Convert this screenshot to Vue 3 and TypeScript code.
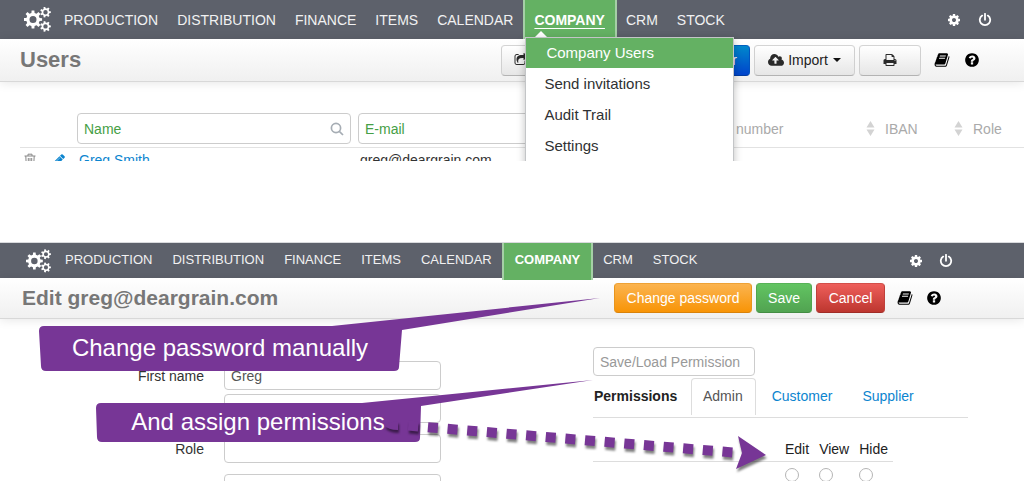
<script setup lang="ts">
import { ref } from 'vue'

const icons = {
  cog: 'M1152 896q0-106-75-181t-181-75-181 75-75 181 75 181 181 75 181-75 75-181zm512-109v222q0 12-8 23t-20 13l-185 28q-19 54-39 91 35 50 107 138 10 12 10 25t-9 23q-27 37-99 108t-94 71q-12 0-26-9l-138-108q-44 23-91 38-16 136-29 186-7 28-36 28h-222q-14 0-24.500-8.500t-11.500-21.500l-28-184q-49-16-90-37l-141 107q-10 9-25 9-14 0-25-11-126-114-165-168-7-10-7-23 0-12 8-23 15-21 51-66.500t54-70.500q-27-50-41-99l-183-27q-13-2-21-12.500t-8-23.500v-222q0-12 8-23t19-13l186-28q14-46 39-92-40-57-107-138-10-12-10-24 0-10 9-23 26-36 98.500-107.500t94.500-71.500q13 0 26 10l138 107q44-23 91-38 16-136 29-186 7-28 36-28h222q14 0 24.500 8.500t11.500 21.500l28 184q49 16 90 37l142-107q9-9 24-9 13 0 25 10 129 119 165 170 7 8 7 22 0 12-8 23-15 21-51 66.500t-54 70.500q26 50 41 98l183 28q13 2 21 12.500t8 23.500z',
  help: 'M1024 1376v-192q0-14-9-23t-23-9h-192q-14 0-23 9t-9 23v192q0 14 9 23t23 9h192q14 0 23-9t9-23zm256-672q0-88-55.500-163t-138.500-116-170-41q-243 0-371 213-15 24 8 42l132 100q7 6 19 6 16 0 25-12 53-68 86-92 34-24 86-24 48 0 85.500 26t37.500 59q0 38-20 61t-68 45q-63 28-115.500 86.500t-52.500 125.500v36q0 14 9 23t23 9h192q14 0 23-9t9-23q0-19 21.500-49.500t54.500-49.500q32-18 49-28.500t46-35 44.500-48 28-60.500 12.500-81zm384 192q0 209-103 385.500t-279.500 279.500-385.500 103-385.500-103-279.500-279.500-103-385.500 103-385.500 279.500-279.500 385.500-103 385.500 103 279.500 279.500 103 385.500z',
  cloud: 'M1280 864q0-14-9-23l-352-352q-9-9-23-9t-23 9l-351 351q-10 12-10 24 0 14 9 23t23 9h224v352q0 13 9.500 22.500t22.500 9.500h192q13 0 22.500-9.500t9.500-22.500v-352h224q13 0 22.500-9.500t9.500-22.500zm640 288q0 159-112.500 271.500t-271.500 112.500h-1088q-185 0-316.500-131.500t-131.500-316.500q0-130 70-240t188-165q-2-30-2-43 0-212 150-362t362-150q156 0 285.500 87t188.500 231q71-62 166-62 106 0 181 75t75 181q0 76-41 138 130 31 213.500 135.500t83.500 238.500z',
  print: 'M448 1536h896v-256h-896v256zm0-640h896v-384h-160q-40 0-68-28t-28-68v-160h-640v640zm1152 64q0-26-19-45t-45-19-45 19-19 45 19 45 45 19 45-19 19-45zm128 0v416q0 13-9.500 22.500t-22.500 9.500h-224v160q0 40-28 68t-68 28h-960q-40 0-68-28t-28-68v-160h-224q-13 0-22.500-9.500t-9.500-22.500v-416q0-79 56.500-135.500t135.500-56.500h64v-544q0-40 28-68t68-28h672q40 0 88 20t76 48l152 152q28 28 48 76t20 88v256h64q79 0 135.500 56.500t56.500 135.500z',
  book: 'M1703 478q40 57 18 129l-275 906q-19 64-76.500 107.500t-122.500 43.500h-923q-77 0-148.500-53.500t-99.500-131.500q-24-67-2-127 0-4 3-27t4-37q1-8-3-21.500t-3-19.500q2-11 8-21t16.500-23.500 16.500-23.500q23-38 45-91.500t30-91.500q3-10 .5-30t-.5-28q3-11 17-28t17-23q21-36 42-92t25-90q1-9-2.500-32t.5-28q4-13 22-30.500t22-22.500q19-26 42.500-84.500t27.500-96.500q1-8-3-25.500t-2-26.500q2-8 9-18t18-23 17-21q8-12 16.500-30.500t15-35 16-36 19.500-32 26.500-23.500 36-11.500 47.500 5.500l-1 3q38-9 51-9h761q74 0 114 56t18 130l-274 906q-36 119-71.500 153.500t-128.500 34.500h-869q-27 0-38 15-11 16-1 43 24 70 144 70h923q29 0 56-15.500t35-41.500l300-987q7-22 5-57 38 15 59 43zm-1064 2q-4 13 2 22.500t20 9.500h608q13 0 25.500-9.500t16.500-22.500l21-64q4-13-2-22.500t-20-9.500h-608q-13 0-25.500 9.500t-16.500 22.500zm-83 256q-4 13 2 22.500t20 9.500h608q13 0 25.500-9.500t16.500-22.500l21-64q4-13-2-22.500t-20-9.500h-608q-13 0-25.500 9.500t-16.500 22.500z',
  share: 'M1472 989v259q0 119-84.500 203.500t-203.500 84.500h-832q-119 0-203.500-84.500t-84.500-203.500v-832q0-119 84.500-203.500t203.500-84.500h255q13 0 22.500 9.500t9.500 22.500q0 27-26 32-77 26-133 60-10 4-16 4h-112q-66 0-113 47t-47 113v832q0 66 47 113t113 47h832q66 0 113-47t47-113v-214q0-19 18-29 28-13 54-37 16-16 35-8 21 9 21 31zm237-496l-384 384q-18 19-45 19-12 0-25-5-39-17-39-59v-192h-160q-323 0-438 131-119 137-74 473 3 23-20 34-8 2-12 2-16 0-26-13-10-14-21-31t-39.500-68.500-49.500-99.500-38.500-114-17.500-122q0-49 3.500-91t14-90 28-88 47-81.500 68.500-74 94.500-61.500 124.500-48.500 159.500-30.500 196.500-11h160v-192q0-42 39-59 13-5 25-5 26 0 45 19l384 384q19 19 19 45t-19 45z',
  pencil: 'M491 1536l91-91-235-235-91 91v107h128v128h107zm523-928q0-22-22-22-10 0-17 7l-542 542q-7 7-7 17 0 22 22 22 10 0 17-7l542-542q7-7 7-17zm-54-192l416 416-832 832h-416v-416zm683 96q0 53-37 90l-166 166-416-416 166-165q36-38 90-38 53 0 91 38l235 234q37 39 37 91z',
}

/** Path of a toothed wheel with a round hole (fill-rule: evenodd). */
function gear(cx: number, cy: number, outer: number, inner: number, hole: number, teeth: number): string {
  const step = (Math.PI * 2) / teeth
  const points: string[] = []
  for (let i = 0; i < teeth; i++) {
    const a = i * step
    const corners: [number, number][] = [
      [inner, -0.3], [outer, -0.19], [outer, 0.19], [inner, 0.3],
    ]
    for (const [r, t] of corners) {
      points.push(`${(cx + r * Math.cos(a + t * step)).toFixed(2)} ${(cy + r * Math.sin(a + t * step)).toFixed(2)}`)
    }
  }
  return `M${points.join('L')}ZM${cx - hole} ${cy}a${hole} ${hole} 0 1 0 ${hole * 2} 0a${hole} ${hole} 0 1 0 ${-hole * 2} 0Z`
}

const logo =
  gear(9, 12.5, 9.2, 6.8, 3.5, 8) + gear(21.5, 5.2, 5.4, 3.9, 2.2, 7) + gear(21.5, 19.4, 5.4, 3.9, 2.2, 7)

const sections = ['PRODUCTION', 'DISTRIBUTION', 'FINANCE', 'ITEMS', 'CALENDAR', 'COMPANY', 'CRM', 'STOCK']
const menu = ['Company Users', 'Send invitations', 'Audit Trail', 'Settings']
const tabs = ['Admin', 'Customer', 'Supplier']
const levels = ['Edit', 'View', 'Hide']

const nameFilter = ref('')
const emailFilter = ref('')
const firstName = ref('Greg')
const lastName = ref('')
const role = ref('')
const extra = ref('')
const preset = ref('')
const level = ref('')
</script>

<template>
  <div class="page">
    <section class="screen users">
      <nav class="nav">
        <svg class="logo" viewBox="0 0 28 25" aria-hidden="true"><path :d="logo" fill-rule="evenodd" /></svg>
        <ul class="sections">
          <li v-for="s in sections" :key="s" :class="{ current: s === 'COMPANY' }">
            <a href="#">{{ s }}</a>
            <template v-if="s === 'COMPANY'">
              <span class="caret-up"></span>
              <ul class="menu">
                <li v-for="(m, i) in menu" :key="m"><a href="#" :class="{ active: i === 0 }">{{ m }}</a></li>
              </ul>
            </template>
          </li>
        </ul>
        <div class="tools">
          <button type="button" aria-label="Preferences"><svg viewBox="0 0 1792 1792"><path :d="icons.cog" /></svg></button>
          <button type="button" aria-label="Log out">
            <svg class="power" viewBox="0 0 14 14"><path d="M4.200 2.600A5.200 5.200 0 1 0 9.800 2.600M7 .8V6.800" /></svg>
          </button>
        </div>
      </nav>
      <header class="bar">
        <h1>Users</h1>
        <div class="actions">
          <button type="button" class="btn export" aria-label="Export"><svg viewBox="0 0 1792 1792"><path :d="icons.share" /></svg></button>
          <button type="button" class="btn primary">user</button>
          <button type="button" class="btn import">
            <svg viewBox="0 0 1920 1792"><path :d="icons.cloud" /></svg>Import<span class="caret-down"></span>
          </button>
          <button type="button" class="btn print" aria-label="Print"><svg viewBox="0 0 1792 1792"><path :d="icons.print" /></svg></button>
          <a href="#" class="glyph" aria-label="Manual"><svg viewBox="0 0 1792 1792"><path :d="icons.book" /></svg></a>
          <a href="#" class="glyph" aria-label="Help"><svg viewBox="0 0 1792 1792"><path :d="icons.help" /></svg></a>
        </div>
      </header>
      <table class="list">
        <colgroup>
          <col class="c-icons" /><col class="c-name" /><col /><col class="c-number" /><col class="c-iban" /><col class="c-role" />
        </colgroup>
        <thead>
          <tr>
            <th></th>
            <th>
              <div class="search">
                <input v-model="nameFilter" type="text" placeholder="Name" aria-label="Name" />
                <svg viewBox="0 0 14 14"><circle cx="6" cy="6" r="4.600" /><path d="M9.300 9.300L13 13" /></svg>
              </div>
            </th>
            <th><div class="search"><input v-model="emailFilter" type="text" placeholder="E-mail" aria-label="E-mail" /></div></th>
            <th>number</th>
            <th><span class="sortable"><svg viewBox="0 0 9 15"><path d="M4.500 0L8.500 6.500H.5ZM4.500 15L8.500 8.500H.5Z" /></svg>IBAN</span></th>
            <th><span class="sortable"><svg viewBox="0 0 9 15"><path d="M4.500 0L8.500 6.500H.5ZM4.500 15L8.500 8.500H.5Z" /></svg>Role</span></th>
          </tr>
        </thead>
        <tbody>
          <tr>
            <td>
              <div class="row-icons">
                <button type="button" aria-label="Delete">
                  <svg class="trash" viewBox="0 0 12 14"><path d="M.5 3H11.500M4 3V1.200H8V3M1.800 3L2.300 13H9.700L10.200 3M4.300 5V11M6 5V11M7.700 5V11" /></svg>
                </button>
                <button type="button" aria-label="Edit user"><svg class="pencil" viewBox="0 0 1792 1792"><path :d="icons.pencil" /></svg></button>
              </div>
            </td>
            <td><a href="#">Greg Smith</a></td>
            <td>greg@deargrain.com</td>
            <td></td>
            <td></td>
            <td></td>
          </tr>
        </tbody>
      </table>
    </section>

    <section class="screen edit">
      <nav class="nav">
        <svg class="logo" viewBox="0 0 28 25" aria-hidden="true"><path :d="logo" fill-rule="evenodd" /></svg>
        <ul class="sections">
          <li v-for="s in sections" :key="s" :class="{ current: s === 'COMPANY' }"><a href="#">{{ s }}</a></li>
        </ul>
        <div class="tools">
          <button type="button" aria-label="Preferences"><svg viewBox="0 0 1792 1792"><path :d="icons.cog" /></svg></button>
          <button type="button" aria-label="Log out">
            <svg class="power" viewBox="0 0 14 14"><path d="M4.200 2.600A5.200 5.200 0 1 0 9.800 2.600M7 .8V6.800" /></svg>
          </button>
        </div>
      </nav>
      <header class="bar">
        <h1>Edit greg@deargrain.com</h1>
        <div class="actions">
          <button type="button" class="btn warning">Change password</button>
          <button type="button" class="btn success">Save</button>
          <button type="button" class="btn danger">Cancel</button>
          <a href="#" class="glyph" aria-label="Manual"><svg viewBox="0 0 1792 1792"><path :d="icons.book" /></svg></a>
          <a href="#" class="glyph" aria-label="Help"><svg viewBox="0 0 1792 1792"><path :d="icons.help" /></svg></a>
        </div>
      </header>
      <div class="body">
        <form class="fields" @submit.prevent>
          <div class="field tight">
            <label for="first">First name</label><input id="first" v-model="firstName" type="text" />
          </div>
          <div class="field"><span></span><input v-model="lastName" type="text" aria-label="Last name" /></div>
          <div class="field"><label for="role">Role</label><input id="role" v-model="role" type="text" /></div>
          <div class="field"><span></span><input v-model="extra" type="text" aria-label="Details" /></div>
        </form>
        <div class="permissions">
          <input v-model="preset" class="preset" type="text" placeholder="Save/Load Permission" aria-label="Save/Load Permission" />
          <div class="tabs">
            <strong>Permissions</strong>
            <a v-for="(t, i) in tabs" :key="t" href="#" :class="{ selected: i === 0 }">{{ t }}</a>
          </div>
          <table class="levels">
            <thead>
              <tr><th class="what"></th><th v-for="l in levels" :key="l">{{ l }}</th></tr>
            </thead>
            <tbody>
              <tr>
                <td></td>
                <td v-for="l in levels" :key="l"><input v-model="level" type="radio" name="level" :value="l" :aria-label="l" /></td>
              </tr>
            </tbody>
          </table>
        </div>
      </div>
      <svg class="notes" width="1024" height="239" viewBox="0 242 1024 239">
        <path d="M44 326H332L600 298L402 330L399 367Q399 371 394 371H46Q41 371 41 366L39 331Q39 326 44 326Z" />
        <path d="M101 403H362L593 380L421 406L420 438Q420 442 415 442H102Q97 442 97 437L96 408Q96 403 101 403Z" />
        <text x="220" y="356" text-anchor="middle">Change password manually</text>
        <text x="258" y="430" text-anchor="middle">And assign permissions</text>
        <g class="arrow">
          <path d="M384 425Q388 430 398 430V421Q390 422 384 425Z" />
          <path class="dashes" d="M408.300 425.600L736 452.700" />
          <path d="M738 436L766 455L736 469L742 453Z" />
        </g>
      </svg>
    </section>
  </div>
</template>

<style>
body {
  margin: 0;
  background: #fff;
}
</style>

<style scoped>
.page {
  display: flex;
  flex-direction: column;
  gap: 81px;
  font: 14px/20px "Liberation Sans", Arial, sans-serif;
  color: #333;
}
.page *,
.page *::before {
  box-sizing: border-box;
}
ul {
  list-style: none;
  margin: 0;
  padding: 0;
}
a {
  color: #0c85cf;
  text-decoration: none;
}
button,
input {
  font: inherit;
}
button {
  cursor: pointer;
}
.screen {
  position: relative;
  overflow: hidden;
}
.users {
  height: 161px;
}
.edit {
  height: 239px;
  border-top: 1px solid #d9dadd;
}

.nav {
  display: flex;
  align-items: center;
  height: 39px;
  padding: 0 32px 0 24px;
  background: #5d616b;
}
.edit .nav {
  height: 35px;
  padding: 0 71px 0 26px;
  font-size: 13px;
}
.logo {
  width: 28px;
  height: 25px;
  fill: #fff;
}
.edit .logo {
  width: 26px;
  height: 24px;
}
.sections {
  display: flex;
  align-self: stretch;
  padding-left: 3px;
}
.sections > li {
  position: relative;
  height: 39px;
}
.sections > li > a {
  display: block;
  padding: 0 10px 0 9px;
  line-height: 40px;
  color: #f1f1f2;
}
.edit .sections > li {
  height: 35px;
}
.edit .sections > li > a {
  padding: 0 10px;
  line-height: 34px;
}
.sections > .current {
  background: #64b163;
  border: solid #a5cfa6;
  border-width: 0 2px;
}
.sections > .current > a {
  font-weight: bold;
  color: #fff;
}
.users .current > a {
  text-decoration: underline;
  text-underline-offset: 3px;
}
.edit .sections > .current {
  height: 37px;
  z-index: 1;
}
.edit .sections > .current > a {
  padding: 0 11px;
}
.caret-up {
  position: absolute;
  left: 10px;
  bottom: 2px;
  border: solid transparent;
  border-width: 0 6px 6px;
  border-bottom-color: #fff;
}
.menu {
  position: absolute;
  z-index: 3;
  top: 37px;
  left: 0;
  width: 209px;
  padding-bottom: 8px;
  background: #fff;
  border: 1px solid #c3c5c7;
  box-shadow: 0 3px 8px rgba(0, 0, 0, 0.25);
  font-size: 15px;
}
.menu a {
  display: block;
  padding: 0 18px;
  line-height: 31px;
  color: #2f3133;
}
.menu a.active {
  padding-left: 20px;
  line-height: 30px;
  color: #fff;
  background: #64b163;
}
.tools {
  display: flex;
  gap: 17px;
  margin-left: auto;
}
.tools button {
  display: flex;
  padding: 0;
  border: 0;
  background: none;
}
.tools svg {
  width: 14px;
  height: 14px;
  fill: #fff;
}
.tools .power {
  fill: none;
  stroke: #fff;
  stroke-width: 1.8;
  stroke-linecap: round;
}
.edit .tools {
  gap: 16px;
}

.bar {
  display: flex;
  align-items: center;
  height: 43px;
  padding: 0 44px 0 20px;
  background: linear-gradient(#fff, #f0f0f0);
  border-bottom: 1px solid #d8d8d8;
  box-shadow: 0 1px 10px rgba(0, 0, 0, 0.1);
}
.edit .bar {
  height: 41px;
  padding: 0 82px 0 22px;
}
h1 {
  margin: 0;
  font-size: 22px;
  line-height: 24px;
  color: #777;
}
.edit h1 {
  font-size: 21px;
}
.actions {
  display: flex;
  align-items: center;
  gap: 4px;
  margin-left: auto;
}
.btn {
  display: flex;
  align-items: center;
  justify-content: center;
  height: 31px;
  padding: 0 12px;
  border: 1px solid #c4c4c4;
  border-color: #d4d4d4 #d0d0d0 #b3b3b3;
  border-radius: 4px;
  background: linear-gradient(#fff, #e6e6e6);
  color: #222;
  white-space: nowrap;
}
.btn svg {
  width: 14px;
  height: 14px;
  fill: #2a2a2a;
}
.export {
  width: 140px;
  justify-content: flex-start;
}
.primary {
  width: 105px;
  justify-content: flex-end;
  color: #fff;
  background: linear-gradient(#0088cc, #0044cc);
  border-color: #0060c0 #0054c0 #003ca0;
}
.import {
  width: 101px;
}
.import svg {
  width: 16px;
  height: 15px;
  margin-right: 4px;
}
.caret-down {
  margin-left: 5px;
  border: 4px solid transparent;
  border-bottom: 0;
  border-top-color: #111;
}
.print {
  width: 62px;
}
.glyph {
  display: flex;
  margin-left: 9px;
}
.glyph + .glyph {
  margin-left: 10px;
}
.glyph svg {
  width: 16px;
  height: 16px;
  fill: #000;
}
.edit .glyph {
  margin-left: 8px;
}
.edit .glyph + .glyph {
  margin-left: 9px;
}
.edit .btn {
  height: 30px;
  color: #fff;
}
.warning {
  width: 138px;
  background: linear-gradient(#fbb450, #f89406);
  border-color: #eea236 #e8951c #d9820a;
}
.success {
  width: 56px;
  background: linear-gradient(#62c462, #51a351);
  border-color: #57b257 #4fa54f #438c43;
}
.danger {
  width: 69px;
  background: linear-gradient(#ee5f5b, #bd362f);
  border-color: #d34f4a #bf403b #a02c27;
}

.list {
  width: calc(100% - 20px);
  margin: 31px 0 0 20px;
  table-layout: fixed;
  border-collapse: collapse;
}
.c-icons {
  width: 57px;
}
.c-name {
  width: 281px;
}
.c-number {
  width: 130px;
}
.c-iban {
  width: 88px;
}
.c-role {
  width: 70px;
}
th,
td {
  padding: 0;
  text-align: left;
  font-weight: normal;
}
.list th {
  padding-bottom: 2px;
  height: 34px;
  color: #aaa;
  border-bottom: 1px solid #e2e2e2;
}
.list td {
  height: 26px;
  white-space: nowrap;
}
.list td + td {
  padding-left: 2px;
}
.search {
  position: relative;
  margin-right: 7px;
}
.search svg {
  position: absolute;
  right: 7px;
  top: 9px;
  width: 14px;
  height: 14px;
  fill: none;
  stroke: #a6adb4;
  stroke-width: 1.7;
}
input[type="text"] {
  display: block;
  width: 100%;
  height: 31px;
  padding: 0 6px;
  border: 1px solid #ccc;
  border-radius: 4px;
  background: #fff;
  color: #555;
  outline: 0;
}
.search input::placeholder {
  color: #46a046;
  opacity: 1;
}
.sortable {
  display: flex;
  align-items: center;
  gap: 10px;
}
.sortable svg {
  width: 9px;
  height: 15px;
  fill: #d3d3d3;
}
.row-icons {
  display: flex;
  gap: 16px;
  padding-left: 4px;
}
.row-icons button {
  display: flex;
  padding: 0;
  border: 0;
  background: none;
}
.trash {
  width: 12px;
  height: 14px;
  fill: none;
  stroke: #888;
  stroke-width: 1;
}
.pencil {
  width: 14px;
  height: 14px;
  fill: #0c85cf;
}

.body {
  display: flex;
  gap: 152px;
  padding: 28px 56px 0 104px;
}
.fields {
  display: flex;
  flex-direction: column;
  gap: 11px;
  width: 337px;
  padding-top: 14px;
}
.field {
  display: grid;
  grid-template-columns: 100px 1fr;
  gap: 20px;
  align-items: center;
}
.field.tight {
  margin-bottom: -7px;
}
.field label {
  text-align: right;
}
.edit input[type="text"] {
  height: 29px;
}
.permissions {
  flex: 1;
  color: #222;
}
.permissions .preset {
  width: 162px;
}
.preset::placeholder {
  color: #999;
  opacity: 1;
}
.tabs {
  display: flex;
  height: 42px;
  padding-top: 2px;
  border-bottom: 1px solid #ddd;
  line-height: 37px;
}
.tabs strong {
  width: 98px;
  padding-left: 1px;
}
.tabs a {
  height: 37px;
  padding: 0 14px 0 16px;
}
.tabs a.selected {
  padding: 0 12px 0 11px;
  border: 1px solid #ddd;
  border-bottom: 0;
  border-radius: 4px 4px 0 0;
  line-height: 35px;
  color: #555;
}
.levels {
  margin-top: 20px;
  border-collapse: collapse;
}
.levels th {
  height: 23px;
  padding-right: 10px;
  border-bottom: 1px solid #ddd;
}
.levels th:last-child {
  padding-right: 5px;
}
.levels th.what {
  width: 192px;
  padding: 0;
}
.levels td {
  height: 28px;
}
.levels input {
  display: block;
  appearance: none;
  width: 14px;
  height: 14px;
  margin: 0;
  border: 1px solid #b5b5b5;
  border-radius: 50%;
  background: #fff;
}

.notes {
  position: absolute;
  top: -1px;
  left: 0;
  z-index: 2;
  fill: #773696;
  pointer-events: none;
}
.notes text {
  fill: #fff;
  font-size: 24px;
}
.arrow {
  filter: drop-shadow(1px 3px 1px rgba(0, 0, 0, 0.5));
}
.dashes {
  fill: none;
  stroke: #773696;
  stroke-width: 10;
  stroke-dasharray: 10 9.700;
}
</style>
